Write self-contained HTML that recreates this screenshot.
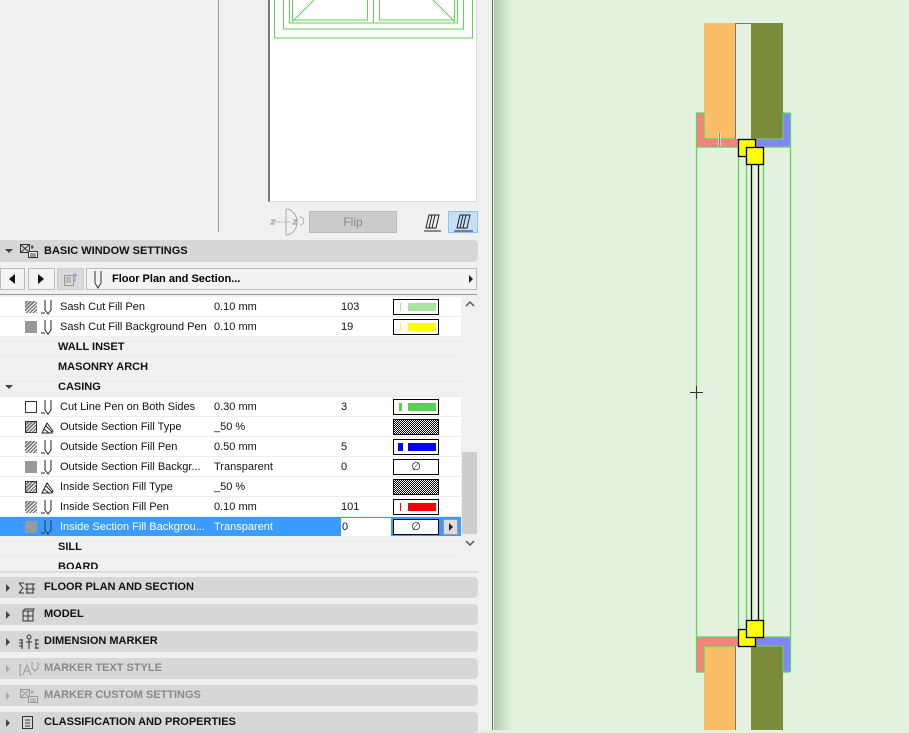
<!DOCTYPE html>
<html><head><meta charset="utf-8"><style>
*{box-sizing:border-box;margin:0;padding:0}
body{width:909px;height:730px;overflow:hidden;background:#e2f2df;font-family:"Liberation Sans",sans-serif;font-size:11px;position:relative}
.a{position:absolute}
#left{left:0;top:0;width:493px;height:730px;background:#f0f0f0;border-right:1px solid #6a6a6a}
#shadow{left:494px;top:0;width:20px;height:730px;background:linear-gradient(90deg,#b4c8b1,#cfe2cc 50%,#e2f2df)}
.sec{left:0;width:478px;height:21px;background:#d7d7d7;border-radius:0 4px 4px 0;font-weight:bold;font-size:11px;line-height:21px;color:#111}
.sec .t{position:absolute;left:44px}
.sec .tri{position:absolute;left:6px;top:7px;width:0;height:0;border-top:4px solid transparent;border-bottom:4px solid transparent;border-left:4px solid #444}
.sec.dis{color:#8a8a8a}
.row{left:0;width:461px;height:20px;background:#fff;border-bottom:1px solid #ececec;line-height:21px;color:#111}
.row.g{background:#f0f0f0;font-weight:bold}
.row.sel{background:#3b9cff;color:#fff}
.row span{position:absolute}
.row svg{position:absolute;left:40px;top:2px}
.sw{position:absolute;left:393px;top:2px;width:46px;height:16px;border:1px solid #000;background:#fff}
.sw i{position:absolute;top:3px;height:8px}
.ic1{position:absolute;left:25px;top:4px;width:12px;height:12px}
.hatch{background:repeating-linear-gradient(135deg,#fff 0 1px,#777 1px 2.5px)}
.grey{background:#999}
.box{border:1px solid #333;background:#fff}
.chk{background:repeating-conic-gradient(#000 0 25%,#fff 0 50%) 0 0/2px 2px}
</style></head><body>
<div id="left" class="a">
 <div class="a" style="left:218px;top:0;width:1px;height:232px;background:#9a9a9a"></div>
 <div class="a" style="left:268px;top:0;width:209px;height:202px;background:#fff;border-left:2px solid #777;border-right:1px solid #ddd;border-bottom:1px solid #ddd"></div>
 <svg class="a" style="left:268px;top:0" width="210" height="45">
  <g fill="none" stroke="#5fd35a" stroke-width="1">
   <rect x="6.5" y="-2" width="198" height="40"/>
   <rect x="15.5" y="-2" width="180" height="31"/>
   <rect x="21.5" y="-2" width="168" height="25"/>
   <rect x="24.5" y="-2" width="75" height="22"/>
   <rect x="111.5" y="-2" width="75" height="22"/>
   <line x1="105.5" y1="0" x2="105.5" y2="23"/>
   <line x1="24" y1="22" x2="46" y2="0"/><line x1="187" y1="22" x2="165" y2="0"/>
  </g></svg>
 <svg class="a" style="left:268px;top:207px" width="36" height="30"><path d="M18 2 A11 13 0 0 1 18 28V2" fill="none" stroke="#aaa"/><path d="M7 15h16" stroke="#aaa" stroke-dasharray="2 1"/><path d="M3 13h4l-4 4h4M25 13h4l-4 4h4" fill="none" stroke="#999"/><path d="M32 10a4 4 0 0 1 0 8" fill="none" stroke="#aaa"/></svg>
 <div class="a" style="left:309px;top:211px;width:88px;height:22px;background:#cbcbcb;border:1px solid #bbb;color:#888;font-size:12px;text-align:center;line-height:20px">Flip</div>
 <svg class="a" style="left:423px;top:211px" width="20" height="22"><path d="M6 4h10l-3 13H3z" fill="none" stroke="#222"/><path d="M9 4l-3 13M12 4l-3 13" stroke="#222"/><path d="M1 20h17" stroke="#222"/></svg>
 <div class="a" style="left:448px;top:211px;width:30px;height:22px;background:#c5dff5;border:1px solid #8cc2ef"></div>
 <svg class="a" style="left:452px;top:211px" width="22" height="22"><path d="M8 4h10l-3 13H5z" fill="none" stroke="#222"/><path d="M11 4l-3 13M14 4l-3 13" stroke="#222"/><path d="M2 20h19" stroke="#222"/></svg>

 <div class="a sec" style="top:240px;height:22px;line-height:22px"><div class="a" style="left:5px;top:9px;border-left:4px solid transparent;border-right:4px solid transparent;border-top:4px solid #444"></div>
  <svg class="a" style="left:19px;top:3px" width="20" height="16"><rect x="1.5" y="1.5" width="9" height="8" fill="none" stroke="#333"/><path d="M2 2l8 7M10 2l-8 7" stroke="#333"/><rect x="9.5" y="8.5" width="9" height="6" fill="#fff" stroke="#333"/><path d="M12 4h3M13 2v4M11 11h6M11 13h6" stroke="#333"/></svg>
  <span class="t">BASIC WINDOW SETTINGS</span></div>

 <div class="a" style="left:0;top:268px;width:25px;height:22px;background:#f3f3f3;border:1px solid #bbb"></div>
 <div class="a" style="left:9px;top:274px;border-top:5px solid transparent;border-bottom:5px solid transparent;border-right:6px solid #111"></div>
 <div class="a" style="left:28px;top:268px;width:27px;height:22px;background:#f3f3f3;border:1px solid #bbb"></div>
 <div class="a" style="left:38px;top:274px;border-top:5px solid transparent;border-bottom:5px solid transparent;border-left:6px solid #111"></div>
 <div class="a" style="left:57px;top:268px;width:27px;height:22px;background:#d9d9d9;border:1px solid #ccc"></div>
 <svg class="a" style="left:62px;top:271px" width="18" height="16"><rect x="2.5" y="4.5" width="9" height="10" fill="none" stroke="#999"/><path d="M4 7h5M4 9h5M4 11h5" stroke="#999"/><path d="M13 11V3l-2 2M13 3l2 2" stroke="#6aa6e0" fill="none"/></svg>
 <div class="a" style="left:86px;top:268px;width:391px;height:22px;background:#f3f3f3;border:1px solid #bbb"></div>
 <svg class="a" style="left:92px;top:270px" width="12" height="20"><path d="M3 1v12l3 5 3-5V1" fill="none" stroke="#333"/></svg>
 <div class="a" style="left:112px;top:268px;line-height:22px;font-weight:bold;font-size:11px">Floor Plan and Section...</div>
 <div class="a" style="left:469px;top:275px;border-top:4px solid transparent;border-bottom:4px solid transparent;border-left:4px solid #222"></div>
 <div class="a" style="left:0;top:294px;width:477px;height:1px;background:#999"></div>

 <div class="a row" style="top:297px"><i class="ic1 hatch"></i><svg width="14" height="16"><path d="M1 14h4M5 1v10l3 4 3-4V1" fill="none" stroke="#222"/></svg><span style="left:60px">Sash Cut Fill Pen</span><span style="left:214px">0.10 mm</span><span style="left:341px">103</span><div class="sw"><i style="left:6px;width:1px;background:#a9e5a0"></i><i style="left:14px;width:28px;background:#a9e5a0"></i></div></div>
 <div class="a row" style="top:317px"><i class="ic1 grey"></i><svg width="14" height="16"><path d="M1 14h4M5 1v10l3 4 3-4V1" fill="none" stroke="#222"/></svg><span style="left:60px">Sash Cut Fill Background Pen</span><span style="left:214px">0.10 mm</span><span style="left:341px">19</span><div class="sw"><i style="left:6px;width:1px;background:#ff0"></i><i style="left:14px;width:28px;background:#ff0"></i></div></div>
 <div class="a row g" style="top:337px"><span style="left:58px">WALL INSET</span></div>
 <div class="a row g" style="top:357px"><span style="left:58px">MASONRY ARCH</span></div>
 <div class="a row g" style="top:377px"><div class="a" style="left:5px;top:8px;border-left:4px solid transparent;border-right:4px solid transparent;border-top:4px solid #444"></div><span style="left:58px">CASING</span></div>
 <div class="a row" style="top:397px"><i class="ic1 box"></i><svg width="14" height="16"><path d="M1 14h4M5 1v10l3 4 3-4V1" fill="none" stroke="#222"/></svg><span style="left:60px">Cut Line Pen on Both Sides</span><span style="left:214px">0.30 mm</span><span style="left:341px">3</span><div class="sw"><i style="left:5px;width:3px;background:#5ccf55"></i><i style="left:14px;width:28px;background:#5ccf55"></i></div></div>
 <div class="a row" style="top:417px"><i class="ic1 hatch" style="border:1px solid #333"></i><svg width="14" height="16"><path d="M2 14l5-10 6 8-1 2z M4 10l5 4M6 7l6 6" fill="none" stroke="#222"/></svg><span style="left:60px">Outside Section Fill Type</span><span style="left:214px">_50 %</span><div class="sw chk"></div></div>
 <div class="a row" style="top:437px"><i class="ic1 hatch"></i><svg width="14" height="16"><path d="M1 14h4M5 1v10l3 4 3-4V1" fill="none" stroke="#222"/></svg><span style="left:60px">Outside Section Fill Pen</span><span style="left:214px">0.50 mm</span><span style="left:341px">5</span><div class="sw"><i style="left:4px;width:5px;background:#00f"></i><i style="left:14px;width:28px;background:#00f"></i></div></div>
 <div class="a row" style="top:457px"><i class="ic1 grey"></i><svg width="14" height="16"><path d="M1 14h4M5 1v10l3 4 3-4V1" fill="none" stroke="#222"/></svg><span style="left:60px">Outside Section Fill Backgr...</span><span style="left:214px">Transparent</span><span style="left:341px">0</span><div class="sw" style="text-align:center;line-height:14px">∅</div></div>
 <div class="a row" style="top:477px"><i class="ic1 hatch" style="border:1px solid #333"></i><svg width="14" height="16"><path d="M2 14l5-10 6 8-1 2z M4 10l5 4M6 7l6 6" fill="none" stroke="#222"/></svg><span style="left:60px">Inside Section Fill Type</span><span style="left:214px">_50 %</span><div class="sw chk"></div></div>
 <div class="a row" style="top:497px"><i class="ic1 hatch"></i><svg width="14" height="16"><path d="M1 14h4M5 1v10l3 4 3-4V1" fill="none" stroke="#222"/></svg><span style="left:60px">Inside Section Fill Pen</span><span style="left:214px">0.10 mm</span><span style="left:341px">101</span><div class="sw"><i style="left:6px;width:1px;background:#f00"></i><i style="left:14px;width:28px;background:#f00"></i></div></div>
 <div class="a row sel" style="top:517px"><i class="ic1 grey"></i><svg width="14" height="16"><path d="M1 14h4M5 1v10l3 4 3-4V1" fill="none" stroke="#333"/></svg><span style="left:60px">Inside Section Fill Backgrou...</span><span style="left:214px">Transparent</span><div class="a" style="left:341px;top:1px;width:50px;height:18px;background:#fff;color:#111;line-height:19px;padding-left:1px">0</div><div class="sw" style="text-align:center;line-height:14px;color:#111">∅</div><div class="a" style="left:443px;top:2px;width:15px;height:16px;background:#ddd;border:1px solid #999"></div><div class="a" style="left:449px;top:6px;border-top:4px solid transparent;border-bottom:4px solid transparent;border-left:4px solid #222"></div></div>
 <div class="a row g" style="top:537px"><span style="left:58px">SILL</span></div>
 <div class="a row g" style="top:557px;height:13px;overflow:hidden"><span style="left:58px">BOARD</span></div>
 <div class="a" style="left:462px;top:297px;width:15px;height:273px;background:#f0f0f0"></div>
 <div class="a" style="left:462px;top:452px;width:15px;height:82px;background:#cdcdcd"></div>
 <svg class="a" style="left:464px;top:299px" width="12" height="10"><path d="M2 7l4-4 4 4" fill="none" stroke="#555" stroke-width="1.5"/></svg>
 <svg class="a" style="left:464px;top:538px" width="12" height="10"><path d="M2 3l4 4 4-4" fill="none" stroke="#555" stroke-width="1.5"/></svg>
 <div class="a" style="left:0;top:571px;width:478px;height:2px;background:#ddd"></div>

 <div class="a sec" style="top:577px"><i class="tri"></i><svg class="a" style="left:18px;top:4px" width="20" height="14"><path d="M1 2h5M1 12h5M1 2l4 5-4 5M7 3h10M9 3v9M15 3v9M7 8h10M8 12h8" fill="none" stroke="#333"/></svg><span class="t">FLOOR PLAN AND SECTION</span></div>
 <div class="a sec" style="top:604px"><i class="tri"></i><svg class="a" style="left:20px;top:4px" width="16" height="14"><path d="M3 3h10v10H3zM3 3l2-2h9l-1 2M8 3v10M3 8h10" fill="none" stroke="#333"/></svg><span class="t">MODEL</span></div>
 <div class="a sec" style="top:631px"><i class="tri"></i><svg class="a" style="left:18px;top:3px" width="22" height="16"><circle cx="11" cy="3" r="2" fill="none" stroke="#333"/><path d="M1 6h4M1 9h4M1 12h4M11 5v10M8 8h6M17 6h4M17 10h4M17 14h4M4 5v10M18 5v10" stroke="#333"/></svg><span class="t">DIMENSION MARKER</span></div>
 <div class="a sec dis" style="top:658px"><i class="tri" style="border-left-color:#aaa"></i><svg class="a" style="left:18px;top:3px" width="22" height="16"><path d="M2 4v10M1 4h3M1 14h3M5 14l4-10 4 10M7 10h4M14 1v6l3 3 3-3V1" fill="none" stroke="#999"/></svg><span class="t">MARKER TEXT STYLE</span></div>
 <div class="a sec dis" style="top:685px"><i class="tri" style="border-left-color:#aaa"></i><svg class="a" style="left:19px;top:3px" width="20" height="16"><rect x="1.5" y="1.5" width="9" height="8" fill="none" stroke="#999"/><path d="M2 2l8 7M10 2l-8 7" stroke="#999"/><rect x="9.5" y="8.5" width="9" height="6" fill="#ddd" stroke="#999"/><path d="M12 4h3M13 2v4M11 11h6M11 13h6" stroke="#999"/></svg><span class="t">MARKER CUSTOM SETTINGS</span></div>
 <div class="a sec" style="top:712px"><i class="tri"></i><svg class="a" style="left:21px;top:3px" width="14" height="16"><rect x="1.5" y="1.5" width="10" height="12" fill="none" stroke="#333"/><path d="M4 5h5M4 8h5M4 11h5" stroke="#333"/></svg><span class="t">CLASSIFICATION AND PROPERTIES</span></div>
</div>
<div id="shadow" class="a"></div>

<svg class="a" style="left:0;top:0" width="909" height="730">
 <rect x="704" y="23" width="31" height="116" fill="#fbbd66"/>
 <rect x="751" y="23" width="32" height="116" fill="#7c8b3a"/>
 <path d="M735 23.5h16M735.5 23v116" stroke="#777"/>
 <path d="M696 113h8v26h34v8h-42z" fill="#fd8080"/>
 <path d="M783 113h7v34h-39v-8h32z" fill="#8484ff"/>
 <rect x="704" y="646" width="31" height="84" fill="#fbbd66"/>
 <rect x="751" y="646" width="32" height="84" fill="#7c8b3a"/>
 <path d="M735.5 646v84" stroke="#777"/>
 <path d="M696 637h42v9h-34v26h-8z" fill="#fd8080"/>
 <path d="M751 637h39v35h-7v-26h-32z" fill="#8484ff"/>
 <g fill="none" stroke="#5fd35a" stroke-width="1.3">
  <path d="M696.5 113v559M790.5 113v559M738.5 139v507M746.5 156v473M763.5 156v473"/>
  <path d="M696 113h8M783 113h7M696 147h42M763 147h27M696 637h42M763 637h27M696 672h8M783 672h7"/>
  <path d="M704 113v26h31M783 113v26h-32M704 672v-26h31M783 672v-26h-32"/>
 </g>
 <path d="M751.5 160v465M758.5 160v465" stroke="#000" stroke-width="1.3"/>
 <rect x="738.5" y="139.5" width="17" height="17" fill="#ff0" stroke="#000" stroke-width="1.3"/>
 <rect x="746.5" y="147.5" width="17" height="17" fill="#ff0" stroke="#000" stroke-width="1.3"/>
 <rect x="738.5" y="629.5" width="17" height="17" fill="#ff0" stroke="#000" stroke-width="1.3"/>
 <rect x="746.5" y="620.5" width="17" height="17" fill="#ff0" stroke="#000" stroke-width="1.3"/>
 <path d="M719.5 133v13" stroke="#fff" stroke-width="2"/><path d="M719.5 133v13" stroke="#333" stroke-width="0.6"/>
 <path d="M690 392.5h13M696.5 386v13" stroke="#333"/>
</svg>
</body></html>
